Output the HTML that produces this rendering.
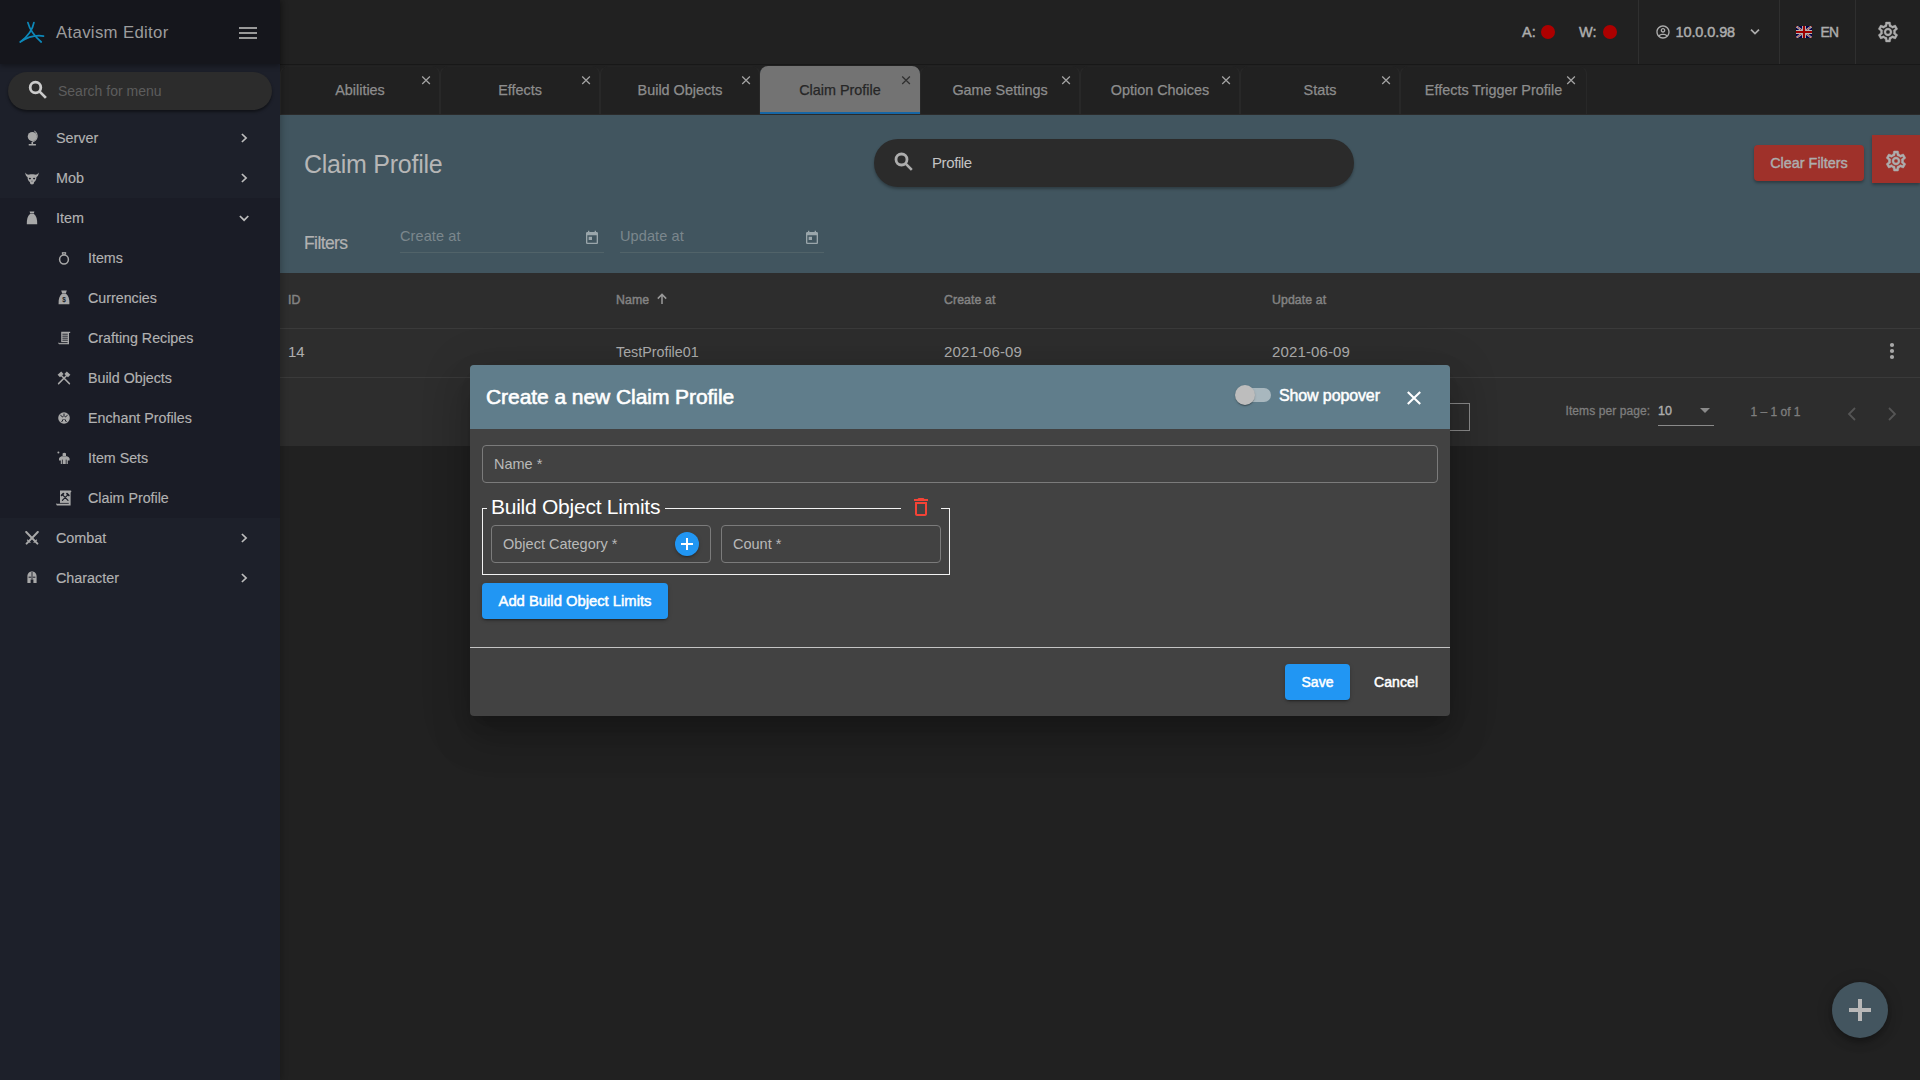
<!DOCTYPE html>
<html lang="en">
<head>
<meta charset="utf-8">
<title>Atavism Editor</title>
<style>
*{box-sizing:border-box;margin:0;padding:0}
html,body{width:1920px;height:1080px;overflow:hidden;background:#212121}
body{font-family:"Liberation Sans",sans-serif;font-size:14px;color:#adadad;position:relative}
.abs{position:absolute}
.sb{font-weight:400 !important;-webkit-text-stroke:.5px currentColor}
.t{position:absolute;white-space:nowrap;line-height:20px}
svg{display:block;position:absolute}

/* ---------- sidebar ---------- */
#side{position:absolute;left:0;top:0;width:280px;height:1080px;background:#1d202a;box-shadow:2px 0 6px rgba(0,0,0,.22);z-index:2}
#side-head{position:absolute;left:0;top:0;width:280px;height:64px;background:#15161c;box-shadow:0 2px 5px rgba(0,0,0,.35)}
#side-search{position:absolute;left:8px;top:72px;width:264px;height:38px;border-radius:19px;background:#2c2c2c;box-shadow:0 2px 3px rgba(0,0,0,.45)}
#grp{position:absolute;left:0;top:198px;width:280px;height:320px;background:#1a1c26}
.mi{position:absolute;left:56px;font-size:14.35px;-webkit-text-stroke:.15px #b2b2b2;color:#b2b2b2;line-height:20px;white-space:nowrap}
.si{position:absolute;left:88px;font-size:14.25px;-webkit-text-stroke:.15px #b2b2b2;color:#b2b2b2;line-height:20px;white-space:nowrap}

/* ---------- top bar ---------- */
#top{position:absolute;left:280px;top:0;width:1640px;height:65px;background:#212121;border-bottom:1px solid #181818}
.vd{position:absolute;top:0;width:1px;height:64px;background:#2f2f2f}
.tb{position:absolute;font-weight:400;font-size:14.5px;color:#adadad;line-height:20px;top:22px;white-space:nowrap;-webkit-text-stroke:.45px #adadad}
.dot{position:absolute;width:14px;height:14px;border-radius:50%;background:#ad0000;top:25px}

/* ---------- tabs ---------- */
#tabs{position:absolute;left:280px;top:65px;width:1640px;height:50px;background:#212121;border-bottom:1px solid #2a2a2a}
.tab{position:absolute;top:1px;height:48px;border-radius:8px 8px 0 0;border:1px solid #282828;border-top-color:#232323;border-bottom:none;background:#212121}
.tab span{position:absolute;left:0;right:0;top:13px;-webkit-text-stroke:.25px currentColor;text-align:center;font-size:14.4px;line-height:20px;color:#8d8d8d;white-space:nowrap}
.tab.act{background:#737373;border:none;box-shadow:inset 0 -2px 0 #1666a5}
.tab.act span{color:#262626;top:14px}
.tab.act svg{top:9px;right:9px}
.tab svg{right:8px;top:8px}

/* ---------- band ---------- */
#band{position:absolute;left:280px;top:115px;width:1640px;height:158px;background:#41555f}
#pill{position:absolute;left:594px;top:24px;width:480px;height:48px;border-radius:24px;background:#2b2b2b;box-shadow:0 2px 3px rgba(0,0,0,.3)}

/* ---------- table ---------- */
#tbl{position:absolute;left:280px;top:273px;width:1640px;height:173px;background:#2d2d2d}
.hl{position:absolute;left:0;width:1640px;height:1px;background:#3a3a3a}
.th{position:absolute;top:17px;font-size:12.3px;font-weight:400;-webkit-text-stroke:.45px #838383;color:#838383;letter-spacing:.1px;line-height:20px;white-space:nowrap}
.td{position:absolute;top:69px;font-size:14.3px;color:#adadad;line-height:20px;white-space:nowrap}
.pg{position:absolute;font-size:12px;color:#7e7e7e;line-height:16px;white-space:nowrap}

/* ---------- dialog ---------- */
#dlg{position:absolute;left:470px;top:365px;width:980px;height:351px;background:#424242;border-radius:4px;box-shadow:0 11px 15px -7px rgba(0,0,0,.2),0 24px 38px 3px rgba(0,0,0,.14),0 9px 46px 8px rgba(0,0,0,.12)}
#dh{position:absolute;left:0;top:0;width:980px;height:64px;background:#607d8b;border-radius:4px 4px 0 0}
.inp{position:absolute;height:38px;border:1px solid #7b7b7b;border-radius:4px}
.lbl{position:absolute;font-size:14.5px;color:#b9b9b9;line-height:20px;white-space:nowrap}
.btn{position:absolute;height:36px;border-radius:4px;background:#2196f3;color:#fff;font-weight:700;text-align:center;line-height:36px;white-space:nowrap;box-shadow:0 3px 1px -2px rgba(0,0,0,.2),0 2px 2px 0 rgba(0,0,0,.14),0 1px 5px 0 rgba(0,0,0,.12)}
</style>
</head>
<body>

<!-- ================= SIDEBAR ================= -->
<div id="side">
  <div id="side-head">
    <svg style="left:19.2px;top:21px" width="26" height="24" viewBox="0 0 26 24" fill="none" stroke="#0d88b9" stroke-width="1.75" stroke-linecap="round">
      <path d="M8.9 1.6 C10.3 7.2 12.6 12.4 22.2 21"/>
      <path d="M14.9 1.6 C13.6 9 9.2 15 1.4 20.9"/>
      <path d="M1.4 20.9 C8 16.4 16 13.8 24.5 15.1"/>
    </svg>
    <div class="t" style="left:56px;top:22.5px;font-size:16.8px;color:#9c9c9c;letter-spacing:.32px">Atavism Editor</div>
    <svg style="left:236px;top:21.3px" width="24" height="24" viewBox="0 0 24 24" fill="#999"><path d="M3 18h18v-2H3v2zm0-5h18v-2H3v2zm0-7v2h18V6H3z"/></svg>
  </div>
  <div id="side-search">
    <svg style="left:17.9px;top:6.3px" width="24" height="24" viewBox="0 0 24 24" fill="none" stroke="#cbcbcb"><circle cx="9.5" cy="9.5" r="5.3" stroke-width="2.8"/><path d="M13.4 13.4 L19.9 19.9" stroke-width="2.7"/></svg>
    <div class="t" style="left:50px;top:9px;font-size:14px;color:#5d5d5d">Search for menu</div>
  </div>
  <div id="grp"></div>

  <!-- top-level: Server -->
  <svg style="left:26px;top:130px" width="14" height="16" viewBox="0 0 14 16" fill="#a8a8a8">
    <circle cx="6.3" cy="6.6" r="4.6"/>
    <path d="M8.6 0.6 C13.6 4 12.6 11.2 6 12.6 L5.8 11.8 C11.2 10.4 12.2 4.6 8.1 1.3z"/>
    <rect x="5.5" y="12" width="1.6" height="2.2"/>
    <rect x="2.6" y="14" width="7.4" height="1.4" rx=".4"/>
  </svg>
  <div class="mi" style="top:128px">Server</div>
  <svg style="left:240px;top:133px" width="8" height="10" viewBox="0 0 8 10" fill="none" stroke="#bdbdbd" stroke-width="1.7"><path d="M1.9 1 L6.1 5 L1.9 9"/></svg>

  <!-- Mob -->
  <svg style="left:25px;top:172px" width="14" height="13" viewBox="0 0 14 13" fill="#a8a8a8">
    <path d="M0.2 0.6 C1.6 2.6 3 3 4.4 2.6 C6 2 8 2 9.6 2.6 C11 3 12.4 2.6 13.8 0.6 C13.6 3.4 12.6 4.6 11.4 5.2 C11.6 7.4 10.6 9 9.2 10 L8.6 12 C7.6 12.6 6.4 12.6 5.4 12 L4.8 10 C3.4 9 2.4 7.4 2.6 5.2 C1.4 4.6 0.4 3.4 0.2 0.6z"/>
    <ellipse cx="4.9" cy="6.6" rx="1.1" ry=".8" fill="#1d1f2a"/><ellipse cx="9.1" cy="6.6" rx="1.1" ry=".8" fill="#1d1f2a"/>
    <path d="M6.4 9.4 L7 8.2 L7.6 9.4z" fill="#1d1f2a"/>
  </svg>
  <div class="mi" style="top:168px">Mob</div>
  <svg style="left:240px;top:173px" width="8" height="10" viewBox="0 0 8 10" fill="none" stroke="#bdbdbd" stroke-width="1.7"><path d="M1.9 1 L6.1 5 L1.9 9"/></svg>

  <!-- Item -->
  <svg style="left:26px;top:211px" width="12" height="14" viewBox="0 0 12 14" fill="#a8a8a8">
    <path d="M3.6 0.6 H8.4 L7.8 2.6 H4.2z"/>
    <path d="M4 3 H8 C10.4 5 11.4 8.6 11.2 13.2 H0.8 C0.6 8.6 1.6 5 4 3z"/>
  </svg>
  <div class="mi" style="top:208px">Item</div>
  <svg style="left:239px;top:214px" width="10" height="8" viewBox="0 0 10 8" fill="none" stroke="#bdbdbd" stroke-width="1.7"><path d="M.9 2 L5.1 6.2 L9.3 2"/></svg>

  <!-- Items (ring) -->
  <svg style="left:58px;top:251px" width="12" height="14" viewBox="0 0 12 14" fill="none" stroke="#a8a8a8">
    <circle cx="6" cy="8.5" r="4.4" stroke-width="1.5"/>
    <rect x="4.4" y="1.7" width="3.2" height="1.5" stroke-width="1.1"/>
  </svg>
  <div class="si" style="top:248px">Items</div>

  <!-- Currencies (money bag) -->
  <svg style="left:58px;top:290px" width="12" height="15" viewBox="0 0 12 15" fill="#a8a8a8">
    <path d="M3.2 0.6 H8.8 L7.8 3.4 H4.2z"/>
    <path d="M4 3.8 H8 C10.6 5.6 11.6 9 11.4 14.2 H0.6 C0.4 9 1.4 5.6 4 3.8z"/>
    <text x="6" y="12" font-size="6.5" font-weight="700" text-anchor="middle" fill="#1a1c26" font-family="Liberation Sans">$</text>
  </svg>
  <div class="si" style="top:288px">Currencies</div>

  <!-- Crafting Recipes (scroll) -->
  <svg style="left:58px;top:331px" width="13" height="14" viewBox="0 0 13 14" fill="#a8a8a8">
    <path d="M3.2 0.8 H12.2 V2 H11 V13.2 H1.2 C0.4 13.2 0.2 12 0.6 11.4 H3.2z"/>
    <g stroke="#1a1c26" stroke-width=".9"><path d="M4.4 3.2H9.8M4.4 5.2H9.8M4.4 7.2H9.8M4.4 9.2H9.8M1 11.6H9.6"/></g>
  </svg>
  <div class="si" style="top:328px">Crafting Recipes</div>

  <!-- Build Objects (crossed hammers) -->
  <svg style="left:57px;top:371px" width="14" height="14" viewBox="0 0 14 14" fill="none" stroke="#a8a8a8" stroke-linecap="round">
    <path d="M3.6 3.8 L12.4 12.6" stroke-width="1.5"/><path d="M10.4 3.8 L1.6 12.6" stroke-width="1.5"/>
    <path d="M0.6 3.8 L4.2 0.4 L6.6 3 L3 6.2z" fill="#a8a8a8" stroke="none"/>
    <path d="M13.4 3.8 L9.8 0.4 L7.4 3 L11 6.2z" fill="#a8a8a8" stroke="none"/>
  </svg>
  <div class="si" style="top:368px">Build Objects</div>

  <!-- Enchant Profiles (disc) -->
  <svg style="left:58px;top:412px" width="12" height="12" viewBox="0 0 12 12">
    <circle cx="6" cy="6" r="5.8" fill="#a8a8a8"/>
    <g stroke="#1a1c26" stroke-width="1" fill="none"><path d="M6 6 L6 1.6M6 6 L2.4 3.2M6 6 L9.6 3.2M6 6 L3.6 10M6 6 L8.4 10"/></g>
    <circle cx="6" cy="6" r="1.3" fill="#a8a8a8"/>
  </svg>
  <div class="si" style="top:408px">Enchant Profiles</div>

  <!-- Item Sets (armor) -->
  <svg style="left:57px;top:451px" width="13" height="14" viewBox="0 0 13 14" fill="#a8a8a8">
    <circle cx="1.4" cy="1.6" r="1"/>
    <path d="M5.6 2.4 C6.4 1.6 8.2 1.6 9 2.4 V5 H5.6z"/>
    <path d="M2 7.4 C3 5.6 4.4 5.2 5.4 5.2 H9.2 C10.2 5.2 11.6 5.6 12.6 7.4 V9.6 H10.8 V13 H3.8 V9.6 H2z"/>
    <path d="M5.4 8.6 V13 M9.2 8.6 V13" stroke="#1a1c26" stroke-width=".8"/>
  </svg>
  <div class="si" style="top:448px">Item Sets</div>

  <!-- Claim Profile (scroll with hammers) -->
  <svg style="left:56px;top:490px" width="16" height="16" viewBox="0 0 16 16" fill="#a8a8a8">
    <path d="M4 0.6 H14.6 C15.6 0.6 15.6 2.4 14.6 2.4 V15.4 H1.2 C0.2 15.4 0 13.8 0.6 13.2 H4z"/>
    <g stroke="#1a1c26" stroke-width="1.1" fill="none" stroke-linecap="round"><path d="M6.4 4.6 L12 10.4M12 4.6 L6.4 10.4"/><path d="M5.6 5.4 L7.4 3.6M12.8 5.4 L11 3.6" stroke-width="1.8"/><path d="M1.2 13.4 H12.4" stroke-width=".8"/></g>
  </svg>
  <div class="si" style="top:488px">Claim Profile</div>

  <!-- Combat (crossed swords) -->
  <svg style="left:25px;top:531px" width="14" height="14" viewBox="0 0 14 14" fill="none" stroke="#a8a8a8" stroke-linecap="round">
    <path d="M1.2 1 L12.4 12.6" stroke-width="2"/><path d="M12.8 1 L1.6 12.6" stroke-width="2"/>
    <path d="M9 11.4 L11.6 9M5 11.4 L2.4 9" stroke-width="1.1"/>
  </svg>
  <div class="mi" style="top:528px">Combat</div>
  <svg style="left:240px;top:533px" width="8" height="10" viewBox="0 0 8 10" fill="none" stroke="#bdbdbd" stroke-width="1.7"><path d="M1.9 1 L6.1 5 L1.9 9"/></svg>

  <!-- Character (helmet) -->
  <svg style="left:27px;top:571px" width="10" height="13" viewBox="0 0 10 13" fill="#a8a8a8">
    <path d="M5 0.4 C8 0.4 9.6 2.6 9.6 5.6 V12 H6.4 V8.4 H3.6 V12 H0.4 V5.6 C0.4 2.6 2 0.4 5 0.4z"/>
    <path d="M5 1 V8.4" stroke="#1d1f2a" stroke-width=".9"/>
    <path d="M1.6 6.2 H4.2 M5.8 6.2 H8.4" stroke="#1d1f2a" stroke-width="1"/>
  </svg>
  <div class="mi" style="top:568px">Character</div>
  <svg style="left:240px;top:573px" width="8" height="10" viewBox="0 0 8 10" fill="none" stroke="#bdbdbd" stroke-width="1.7"><path d="M1.9 1 L6.1 5 L1.9 9"/></svg>
</div>

<!-- ================= TOP BAR ================= -->
<div id="top">
  <div class="tb" style="left:1242px">A:</div><div class="dot" style="left:1261px"></div>
  <div class="tb" style="left:1299px;letter-spacing:.2px">W:</div><div class="dot" style="left:1323px"></div>
  <div class="vd" style="left:1358px"></div>
  <svg style="left:1375px;top:24px" width="16" height="16" viewBox="0 0 24 24" fill="#adadad"><path d="M12 2C6.480 2 2 6.480 2 12s4.480 10 10 10 10-4.480 10-10S17.520 2 12 2zM7.070 18.280c.430-.900 3.050-1.780 4.930-1.780s4.510.880 4.930 1.780C15.570 19.360 13.860 20 12 20s-3.570-.640-4.930-1.720zm11.290-1.450c-1.430-1.740-4.900-2.330-6.360-2.330s-4.930.590-6.360 2.330A7.950 7.950 0 0 1 4 12c0-4.410 3.590-8 8-8s8 3.590 8 8c0 1.820-.620 3.490-1.640 4.830zM12 6c-1.940 0-3.500 1.560-3.500 3.500S10.060 13 12 13s3.500-1.560 3.500-3.500S13.940 6 12 6zm0 5c-.830 0-1.500-.670-1.500-1.500S11.170 8 12 8s1.500.670 1.500 1.500S12.830 11 12 11z"/></svg>
  <div class="tb" style="left:1395.5px;letter-spacing:-.1px">10.0.0.98</div>
  <svg style="left:1470px;top:28px" width="10" height="8" viewBox="0 0 10 8" fill="none" stroke="#adadad" stroke-width="1.7"><path d="M1 1.6 L5 5.6 L9 1.6"/></svg>
  <div class="vd" style="left:1499px"></div>
  <svg style="left:1516px;top:26px" width="16" height="12" viewBox="0 0 16 12">
    <rect width="16" height="12" fill="#00004e"/>
    <path d="M0 0 L16 12 M16 0 L0 12" stroke="#b4b4b4" stroke-width="2.2"/>
    <path d="M0 0 L16 12 M16 0 L0 12" stroke="#9c0000" stroke-width=".9" stroke-dasharray="1.6 1"/>
    <path d="M8 0 V12 M0 6 H16" stroke="#b4b4b4" stroke-width="4"/>
    <path d="M8 0 V12 M0 6 H16" stroke="#9c0000" stroke-width="2.1"/>
  </svg>
  <div class="tb" style="left:1540.5px;top:22.6px;font-size:13.8px;letter-spacing:-.7px">EN</div>
  <div class="vd" style="left:1575px"></div>
  <svg style="left:1596px;top:19.6px" width="24" height="24" viewBox="0 0 24 24" fill="#adadad" stroke="#adadad" stroke-width=".35"><path d="M19.430 12.980c.040-.320.070-.640.070-.980 0-.340-.030-.660-.070-.980l2.110-1.650c.190-.150.240-.420.120-.640l-2-3.460a.5.500 0 0 0-.610-.220l-2.490 1c-.520-.400-1.080-.730-1.690-.980l-.380-2.650A.488.488 0 0 0 14 2h-4c-.250 0-.460.180-.490.420l-.380 2.650c-.610.250-1.170.590-1.690.980l-2.490-1a.566.566 0 0 0-.180-.030c-.170 0-.340.090-.430.250l-2 3.460c-.130.220-.070.490.120.640l2.110 1.650c-.040.320-.070.650-.070.980 0 .330.030.660.070.980l-2.110 1.650c-.190.150-.240.420-.120.640l2 3.460a.5.500 0 0 0 .610.220l2.490-1c.520.400 1.080.730 1.690.980l.380 2.650c.030.240.240.420.490.420h4c.250 0 .460-.180.490-.420l.380-2.650c.610-.250 1.170-.590 1.690-.980l2.490 1c.060.020.120.030.180.030.170 0 .340-.090.430-.250l2-3.460c.120-.220.070-.490-.120-.640l-2.110-1.650zm-1.980-1.710c.040.310.050.520.050.730 0 .210-.020.430-.050.730l-.140 1.130.890.700 1.080.840-.700 1.210-1.270-.510-1.040-.420-.900.680c-.430.320-.840.560-1.250.730l-1.060.430-.160 1.130-.200 1.350h-1.400l-.190-1.350-.160-1.130-1.060-.430c-.430-.180-.830-.410-1.230-.710l-.910-.700-1.060.430-1.270.510-.700-1.210 1.080-.840.890-.700-.140-1.130c-.030-.310-.050-.540-.050-.740s.020-.430.050-.730l.140-1.130-.890-.700-1.080-.840.700-1.210 1.270.510 1.040.420.900-.680c.430-.320.840-.560 1.250-.730l1.060-.430.160-1.130.200-1.350h1.390l.190 1.350.160 1.130 1.060.430c.430.180.830.410 1.230.710l.910.700 1.060-.430 1.270-.510.700 1.210-1.070.850-.890.700.140 1.130zM12 8c-2.210 0-4 1.790-4 4s1.790 4 4 4 4-1.790 4-4-1.790-4-4-4zm0 6c-1.100 0-2-.900-2-2s.900-2 2-2 2 .900 2 2-.900 2-2 2z"/></svg>
</div>

<!-- ================= TABS ================= -->
<div id="tabs">
  <div class="tab" style="left:0px;width:160px"><span>Abilities</span><svg width="10" height="10" viewBox="0 0 10 10" fill="none" stroke="#a4a4a4" stroke-width="1.25"><path d="M1.2 1.5 L8.9 9 M8.9 1.5 L1.2 9"/></svg></div>
  <div class="tab" style="left:160px;width:160px"><span>Effects</span><svg width="10" height="10" viewBox="0 0 10 10" fill="none" stroke="#a4a4a4" stroke-width="1.25"><path d="M1.2 1.5 L8.9 9 M8.9 1.5 L1.2 9"/></svg></div>
  <div class="tab" style="left:320px;width:160px"><span>Build Objects</span><svg width="10" height="10" viewBox="0 0 10 10" fill="none" stroke="#a4a4a4" stroke-width="1.25"><path d="M1.2 1.5 L8.9 9 M8.9 1.5 L1.2 9"/></svg></div>
  <div class="tab act" style="left:480px;width:160px"><span>Claim Profile</span><svg width="10" height="10" viewBox="0 0 10 10" fill="none" stroke="#303030" stroke-width="1.25"><path d="M1.2 1.5 L8.9 9 M8.9 1.5 L1.2 9"/></svg></div>
  <div class="tab" style="left:640px;width:160px"><span>Game Settings</span><svg width="10" height="10" viewBox="0 0 10 10" fill="none" stroke="#a4a4a4" stroke-width="1.25"><path d="M1.2 1.5 L8.9 9 M8.9 1.5 L1.2 9"/></svg></div>
  <div class="tab" style="left:800px;width:160px"><span>Option Choices</span><svg width="10" height="10" viewBox="0 0 10 10" fill="none" stroke="#a4a4a4" stroke-width="1.25"><path d="M1.2 1.5 L8.9 9 M8.9 1.5 L1.2 9"/></svg></div>
  <div class="tab" style="left:960px;width:160px"><span>Stats</span><svg width="10" height="10" viewBox="0 0 10 10" fill="none" stroke="#a4a4a4" stroke-width="1.25"><path d="M1.2 1.5 L8.9 9 M8.9 1.5 L1.2 9"/></svg></div>
  <div class="tab" style="left:1120px;width:187px"><span>Effects Trigger Profile</span><svg style="right:10px" width="10" height="10" viewBox="0 0 10 10" fill="none" stroke="#a4a4a4" stroke-width="1.25"><path d="M1.2 1.5 L8.9 9 M8.9 1.5 L1.2 9"/></svg></div>
</div>

<!-- ================= BAND ================= -->
<div id="band">
  <div class="t" style="left:24px;top:33px;font-size:25px;line-height:32px;color:#b6b6b6;letter-spacing:-.25px">Claim Profile</div>
  <div id="pill">
    <svg style="left:17.9px;top:11px" width="24" height="24" viewBox="0 0 24 24" fill="none" stroke="#adadad"><circle cx="9.5" cy="9.5" r="5.5" stroke-width="2.8"/><path d="M13.6 13.6 L19.8 19.8" stroke-width="2.6"/></svg>
    <div class="t" style="left:58px;top:14px;font-size:15px;color:#c4c4c4;letter-spacing:-.4px">Profile</div>
  </div>
  <div class="abs" style="left:1474px;top:30px;width:110px;height:36px;border-radius:4px;background:#9f312a;box-shadow:0 2px 3px rgba(0,0,0,.3);color:#adadad;font-weight:400;-webkit-text-stroke:.45px #adadad;font-size:14.4px;line-height:36px;text-align:center">Clear Filters</div>
  <div class="abs" style="left:1592px;top:20px;width:48px;height:48px;background:#9f312a;box-shadow:0 2px 3px rgba(0,0,0,.3)">
    <svg style="left:12px;top:14.4px" width="24" height="24" viewBox="0 0 24 24" fill="#adadad" stroke="#adadad" stroke-width=".5"><path d="M19.430 12.980c.040-.320.070-.640.070-.980 0-.340-.030-.660-.070-.980l2.110-1.650c.190-.150.240-.420.120-.640l-2-3.460a.5.500 0 0 0-.610-.220l-2.490 1c-.520-.400-1.080-.730-1.690-.980l-.380-2.650A.488.488 0 0 0 14 2h-4c-.250 0-.460.180-.490.420l-.380 2.650c-.610.250-1.170.590-1.690.980l-2.490-1a.566.566 0 0 0-.180-.030c-.170 0-.340.090-.430.250l-2 3.460c-.130.220-.070.490.120.640l2.110 1.650c-.040.320-.070.650-.070.980 0 .330.030.660.070.980l-2.110 1.650c-.190.150-.240.420-.120.640l2 3.460a.5.500 0 0 0 .610.220l2.490-1c.520.400 1.080.730 1.690.980l.380 2.650c.030.240.240.420.490.420h4c.250 0 .460-.180.490-.420l.380-2.650c.610-.250 1.170-.590 1.690-.980l2.490 1c.060.020.120.030.180.030.170 0 .340-.090.430-.250l2-3.460c.120-.220.070-.490-.120-.640l-2.110-1.650zm-1.980-1.710c.040.310.050.520.050.730 0 .210-.020.430-.050.730l-.140 1.130.890.700 1.080.840-.700 1.210-1.270-.510-1.040-.420-.900.680c-.430.320-.840.560-1.250.730l-1.060.430-.160 1.130-.200 1.350h-1.400l-.190-1.350-.160-1.130-1.060-.430c-.430-.180-.830-.410-1.230-.710l-.910-.700-1.060.430-1.270.510-.700-1.210 1.080-.840.890-.700-.140-1.130c-.030-.310-.050-.540-.050-.740s.020-.430.050-.730l.140-1.130-.890-.700-1.080-.840.700-1.210 1.270.510 1.040.420.900-.680c.430-.320.840-.560 1.250-.730l1.060-.430.160-1.130.200-1.350h1.390l.190 1.350.160 1.130 1.060.430c.430.180.830.410 1.230.710l.910.700 1.060-.430 1.270-.510.700 1.210-1.070.850-.890.700.140 1.130zM12 8c-2.210 0-4 1.790-4 4s1.790 4 4 4 4-1.790 4-4-1.790-4-4-4zm0 6c-1.100 0-2-.900-2-2s.900-2 2-2 2 .900 2 2-.900 2-2 2z"/></svg>
  </div>
  <div class="t" style="left:24px;top:117px;font-size:17.5px;line-height:22px;color:#b2b2b2;letter-spacing:-.6px;-webkit-text-stroke:.2px #b2b2b2">Filters</div>
  <div class="t" style="left:120px;top:111px;font-size:14.5px;color:#7b878d;letter-spacing:.1px">Create at</div>
  <div class="abs" style="left:120px;top:137px;width:204px;height:1px;background:#516369"></div>
  <svg style="left:304px;top:115px" width="16" height="16" viewBox="0 0 24 24" fill="#9aa6ab"><path d="M19 3h-1V1h-2v2H8V1H6v2H5c-1.110 0-1.990.9-1.990 2L3 19a2 2 0 0 0 2 2h14c1.100 0 2-.9 2-2V5c0-1.100-.9-2-2-2zm0 16H5V8h14v11zM7 10h5v5H7z"/></svg>
  <div class="t" style="left:340px;top:111px;font-size:14.5px;color:#7b878d;letter-spacing:.1px">Update at</div>
  <div class="abs" style="left:340px;top:137px;width:204px;height:1px;background:#516369"></div>
  <svg style="left:524px;top:115px" width="16" height="16" viewBox="0 0 24 24" fill="#9aa6ab"><path d="M19 3h-1V1h-2v2H8V1H6v2H5c-1.110 0-1.990.9-1.990 2L3 19a2 2 0 0 0 2 2h14c1.100 0 2-.9 2-2V5c0-1.100-.9-2-2-2zm0 16H5V8h14v11zM7 10h5v5H7z"/></svg>
</div>

<!-- ================= TABLE ================= -->
<div id="tbl">
  <div class="th" style="left:8px">ID</div>
  <div class="th" style="left:336px">Name</div>
  <svg style="left:376px;top:20px" width="12" height="12" viewBox="0 0 12 12" fill="none" stroke="#9a9a9a" stroke-width="1.5"><path d="M6 11 V1.6 M1.8 5.6 L6 1.4 L10.2 5.6"/></svg>
  <div class="th" style="left:664px">Create at</div>
  <div class="th" style="left:992px">Update at</div>
  <div class="hl" style="top:55px"></div>
  <div class="td" style="left:8px;font-size:15px">14</div>
  <div class="td" style="left:336px">TestProfile01</div>
  <div class="td" style="left:664px;font-size:15px;letter-spacing:.13px">2021-06-09</div>
  <div class="td" style="left:992px;font-size:15px;letter-spacing:.13px">2021-06-09</div>
  <svg style="left:1609px;top:68.6px" width="6" height="18" viewBox="0 0 6 18" fill="#a8a8a8"><circle cx="3" cy="3" r="2.1"/><circle cx="3" cy="9" r="2.1"/><circle cx="3" cy="15" r="2.1"/></svg>
  <div class="hl" style="top:104px"></div>
  <div class="abs" style="left:1150px;top:130px;width:40px;height:28px;border:1px solid #8a8a8a"></div>
  <div class="pg" style="left:1285.5px;top:130px;letter-spacing:.08px;-webkit-text-stroke:.3px #7e7e7e">Items per page:</div>
  <div class="pg" style="left:1378px;top:130px;color:#adadad;-webkit-text-stroke:.4px #adadad;font-size:12.5px">10</div>
  <svg style="left:1420px;top:135px" width="10" height="5" viewBox="0 0 10 5" fill="#8a8a8a"><path d="M0 0 H10 L5 5z"/></svg>
  <div class="abs" style="left:1378px;top:152px;width:56px;height:1px;background:#8a8a8a"></div>
  <div class="pg" style="left:1470.5px;top:131px;-webkit-text-stroke:.3px #7e7e7e">1 &ndash; 1 of 1</div>
  <svg style="left:1567px;top:134px" width="10" height="14" viewBox="0 0 10 14" fill="none" stroke="#555" stroke-width="1.8"><path d="M8 1 L2 7 L8 13"/></svg>
  <svg style="left:1607px;top:134px" width="10" height="14" viewBox="0 0 10 14" fill="none" stroke="#555" stroke-width="1.8"><path d="M2 1 L8 7 L2 13"/></svg>
</div>

<!-- ================= FAB ================= -->
<div id="fab" class="abs" style="left:1832px;top:982px;width:56px;height:56px;border-radius:50%;background:#43555f;box-shadow:0 3px 5px -1px rgba(0,0,0,.2),0 6px 10px 0 rgba(0,0,0,.14),0 1px 18px 0 rgba(0,0,0,.12)">
  <div class="abs" style="left:17px;top:26.1px;width:22px;height:3.8px;background:#b8b8b8"></div>
  <div class="abs" style="left:26.1px;top:17px;width:3.8px;height:22px;background:#b8b8b8"></div>
</div>

<!-- ================= DIALOG ================= -->
<div id="dlg">
  <div id="dh">
    <div class="t sb" style="left:16px;top:18px;font-size:21px;line-height:28px;color:#fff;letter-spacing:-.06px;-webkit-text-stroke-width:.6px">Create a new Claim Profile</div>
    <div class="abs" style="left:766px;top:23px;width:35px;height:14px;border-radius:7px;background:#a8b7be"></div>
    <div class="abs" style="left:765px;top:20px;width:20px;height:20px;border-radius:50%;background:#bdbdbd;box-shadow:0 2px 1px -1px rgba(0,0,0,.2),0 1px 1px 0 rgba(0,0,0,.14),0 1px 3px 0 rgba(0,0,0,.12)"></div>
    <div class="t sb" style="left:809px;top:20px;font-size:16px;line-height:22px;color:#fff;letter-spacing:-.12px">Show popover</div>
    <svg style="left:936.1px;top:24.7px" width="16" height="16" viewBox="0 0 16 16" fill="none" stroke="#fff" stroke-width="2.1"><path d="M1.8 1.9 L14.2 13.9 M14.2 1.9 L1.8 13.9"/></svg>
  </div>
  <div class="inp" style="left:12px;top:80px;width:956px"></div>
  <div class="lbl" style="left:24px;top:89px">Name *</div>

  <!-- fieldset -->
  <div class="abs" style="left:12px;top:143px;width:468px;height:67px;border:1px solid #f2f2f2"></div>
  <div class="abs" style="left:17px;top:128px;width:454px;height:30px;background:#424242"></div>
  <div class="t" style="left:21px;top:128px;font-size:21px;line-height:28px;color:#fff;letter-spacing:-.25px">Build Object Limits</div>
  <div class="abs" style="left:195px;top:143px;width:236px;height:1px;background:#f2f2f2"></div>
  <svg style="left:439px;top:130px" width="24" height="24" viewBox="0 0 24 24" fill="#f44336"><path d="M6 19c0 1.100.900 2 2 2h8c1.100 0 2-.900 2-2V7H6v12zM8 9h8v10H8V9zm7.500-5l-1-1h-5l-1 1H5v2h14V4z"/></svg>

  <div class="inp" style="left:21px;top:160px;width:220px"></div>
  <div class="lbl" style="left:33px;top:169px">Object Category *</div>
  <div class="abs" style="left:205px;top:167px;width:24px;height:24px;border-radius:50%;background:#2196f3;box-shadow:0 3px 1px -2px rgba(0,0,0,.2),0 2px 2px 0 rgba(0,0,0,.14),0 1px 5px 0 rgba(0,0,0,.12)">
    <div class="abs" style="left:6px;top:11px;width:12px;height:2px;background:#fff"></div>
    <div class="abs" style="left:11px;top:6px;width:2px;height:12px;background:#fff"></div>
  </div>
  <div class="inp" style="left:251px;top:160px;width:220px"></div>
  <div class="lbl" style="left:263px;top:169px">Count *</div>

  <div class="btn sb" style="left:12px;top:218px;width:186px;font-size:14.8px">Add Build Object Limits</div>
  <div class="abs" style="left:0;top:282px;width:980px;height:1px;background:#c4c4c4"></div>
  <div class="btn sb" style="left:815px;top:299px;width:65px;font-size:14px">Save</div>
  <div class="t sb" style="left:904px;top:307px;font-size:14px;color:#fff;letter-spacing:.1px">Cancel</div>
</div>

</body>
</html>
